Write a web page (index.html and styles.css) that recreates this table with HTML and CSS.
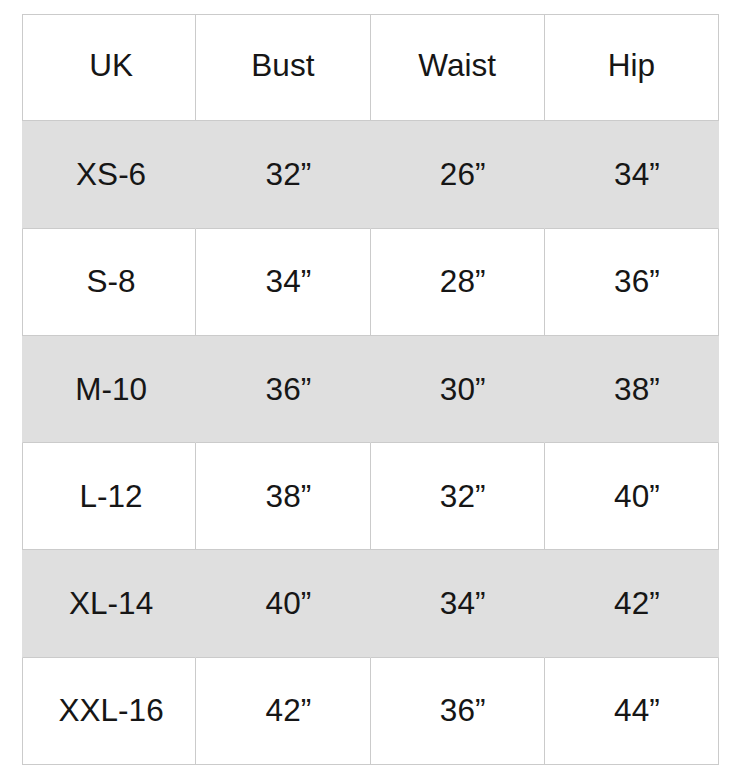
FILE: index.html
```html
<!DOCTYPE html>
<html>
<head>
<meta charset="utf-8">
<link rel="stylesheet" href="styles.css">
</head>
<body>
<table class="size-table">
  <tr class="row white head">
    <td class="size">UK</td><td>Bust</td><td>Waist</td><td>Hip</td>
  </tr>
  <tr class="row gray">
    <td class="size">XS-6</td><td class="val">32”</td><td class="val">26”</td><td class="val">34”</td>
  </tr>
  <tr class="row white">
    <td class="size">S-8</td><td class="val">34”</td><td class="val">28”</td><td class="val">36”</td>
  </tr>
  <tr class="row gray">
    <td class="size">M-10</td><td class="val">36”</td><td class="val">30”</td><td class="val">38”</td>
  </tr>
  <tr class="row white">
    <td class="size">L-12</td><td class="val">38”</td><td class="val">32”</td><td class="val">40”</td>
  </tr>
  <tr class="row gray">
    <td class="size">XL-14</td><td class="val">40”</td><td class="val">34”</td><td class="val">42”</td>
  </tr>
  <tr class="row white">
    <td class="size">XXL-16</td><td class="val">42”</td><td class="val">36”</td><td class="val">44”</td>
  </tr>
</table>
</body>
</html>
```
FILE: styles.css
```css
html, body {
  margin: 0;
  padding: 0;
  background: #ffffff;
}
body {
  padding: 14px 20px 0 22px;
  font-family: "Liberation Sans", Arial, sans-serif;
  color: #161616;
}
.size-table {
  border-collapse: separate;
  border-spacing: 0;
  width: 697px;
  table-layout: fixed;
}
.size-table td {
  box-sizing: border-box;
  height: 107.3px;
  padding: 0;
  text-align: center;
  vertical-align: middle;
  font-size: 31.5px;
  border-right: 1px solid #cbcbcb;
  border-bottom: 1px solid #cbcbcb;
}
.size-table td:first-child {
  border-left: 1px solid #cbcbcb;
}
.size-table td.size {
  padding-left: 4px;
}
.size-table td.val {
  padding-left: 11px;
}
.head td {
  border-top: 1px solid #cbcbcb;
  padding-bottom: 5px;
}
.white td {
  background: #ffffff;
}
.gray td {
  background: #dfdfdf;
  border-right-color: transparent;
}
.gray td:first-child {
  border-left-color: transparent;
}
```
